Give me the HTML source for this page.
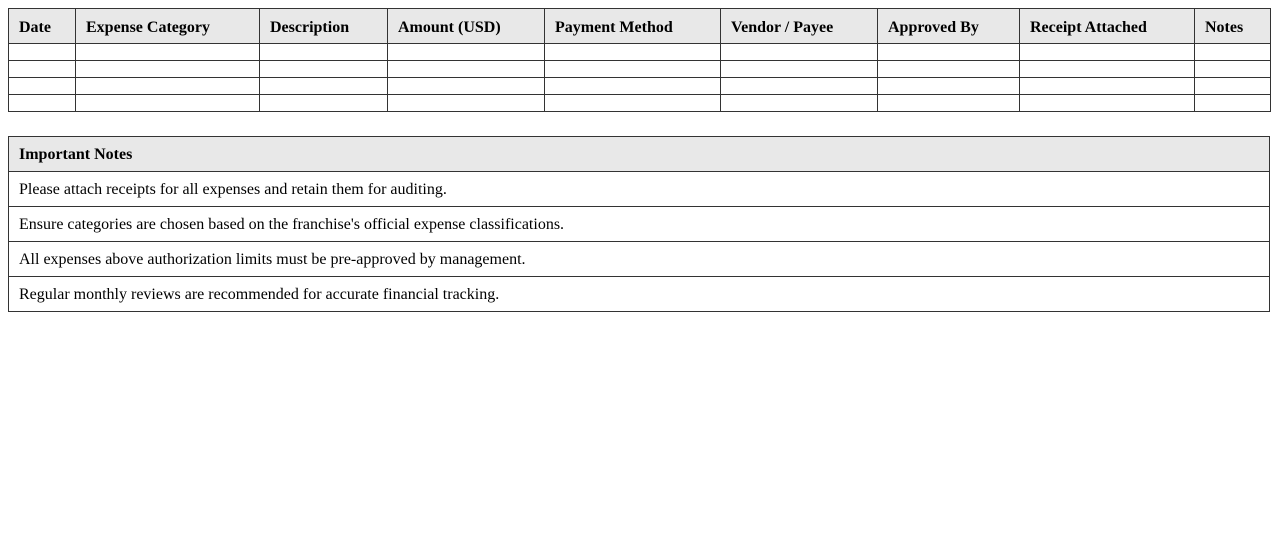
<!DOCTYPE html>
<html><head><meta charset="utf-8"><style>
body{margin:8px;font-family:"Liberation Serif",serif;font-size:16px;color:#000;background:#fff}
table{border-collapse:collapse;width:1262px;table-layout:fixed}
td,th{border:1px solid #333;padding:8px 10px;text-align:left;line-height:18px}
th{background:#e8e8e8;font-weight:bold}
.m th{padding:10px 10px 6px}
.e td{padding:8px 10px;height:0;line-height:0;font-size:0}
.n{margin-top:24px}
.n th,.n td{padding:9px 10px 7px}
</style></head><body>
<table class="m">
<colgroup><col style="width:67px"><col style="width:184px"><col style="width:128px"><col style="width:157px"><col style="width:176px"><col style="width:157px"><col style="width:142px"><col style="width:175px"><col style="width:76px"></colgroup>
<tr><th>Date</th><th>Expense Category</th><th>Description</th><th>Amount (USD)</th><th>Payment Method</th><th>Vendor / Payee</th><th>Approved By</th><th>Receipt Attached</th><th>Notes</th></tr>
<tr class="e"><td></td><td></td><td></td><td></td><td></td><td></td><td></td><td></td><td></td></tr>
<tr class="e"><td></td><td></td><td></td><td></td><td></td><td></td><td></td><td></td><td></td></tr>
<tr class="e"><td></td><td></td><td></td><td></td><td></td><td></td><td></td><td></td><td></td></tr>
<tr class="e"><td></td><td></td><td></td><td></td><td></td><td></td><td></td><td></td><td></td></tr>
</table>
<table class="n">
<tr><th>Important Notes</th></tr>
<tr><td>Please attach receipts for all expenses and retain them for auditing.</td></tr>
<tr><td>Ensure categories are chosen based on the franchise's official expense classifications.</td></tr>
<tr><td>All expenses above authorization limits must be pre-approved by management.</td></tr>
<tr><td>Regular monthly reviews are recommended for accurate financial tracking.</td></tr>
</table>
</body></html>
